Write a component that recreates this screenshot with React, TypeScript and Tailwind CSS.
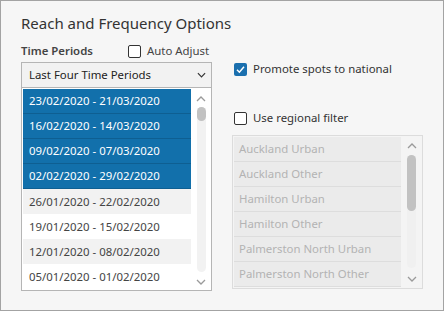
import React from "react";

const font = { fontFamily: '"Noto Sans", "Open Sans", sans-serif' };

function Chevron({ up = false, color = "#9a9a9a", w = 10 }: { up?: boolean; color?: string; w?: number }) {
  return (
    <svg width={w} height={6} viewBox="0 0 10 6" className="block">
      <path d={up ? "M1 5 L5 1 L9 5" : "M1 1 L5 5 L9 1"} fill="none" stroke={color} strokeWidth={1.3} />
    </svg>
  );
}

function Checkbox({ checked = false }: { checked?: boolean }) {
  if (checked) {
    return (
      <div className="w-[13px] h-[13px] rounded-[2px] bg-[#1a6fae] flex items-center justify-center shrink-0">
        <svg width="11" height="11" viewBox="0 0 11 11">
          <path d="M2 5.8 L4.4 8.2 L9 2.8" fill="none" stroke="white" strokeWidth={1.5} />
        </svg>
      </div>
    );
  }
  return <div className="w-[13px] h-[13px] rounded-[2px] border border-[#333] bg-white shrink-0" />;
}

const periods = [
  "23/02/2020 - 21/03/2020",
  "16/02/2020 - 14/03/2020",
  "09/02/2020 - 07/03/2020",
  "02/02/2020 - 29/02/2020",
  "26/01/2020 - 22/02/2020",
  "19/01/2020 - 15/02/2020",
  "12/01/2020 - 08/02/2020",
  "05/01/2020 - 01/02/2020",
];

const regions = [
  "Auckland Urban",
  "Auckland Other",
  "Hamilton Urban",
  "Hamilton Other",
  "Palmerston North Urban",
  "Palmerston North Other",
];

export default function App() {
  return (
    <div className="w-[444px] h-[312px] bg-white" style={font}>
      <div className="w-[444px] h-[311px] border border-[#a3a3a3] bg-[#f6f6f6] pl-[20px] pt-[11px]">
        <div className="text-[15px] leading-[22px] text-[#333] whitespace-nowrap">Reach and Frequency Options</div>
        <div className="flex mt-[7px]">
          {/* left column */}
          <div className="w-[191px] flex flex-col">
            <div className="flex items-center h-[20px] whitespace-nowrap">
              <span className="text-[11.4px] font-semibold text-[#444] w-[107px]">Time Periods</span>
              <Checkbox />
              <span className="text-[11.4px] text-[#444] ml-[6px]">Auto Adjust</span>
            </div>
            <div className="mt-[1px] h-[26px] border border-[#b5b5b5] bg-[#f2f2f2] flex items-center pl-[7px] pr-[5px] justify-between">
              <span className="text-[11.4px] text-[#222] whitespace-nowrap">Last Four Time Periods</span>
              <Chevron color="#333" w={9} />
            </div>
            <div className="h-[203px] border border-[#b5b5b5] border-t-0 bg-white flex pl-[1px] pt-[1px]">
              <div className="w-[168px] flex flex-col">
                {periods.map((p, i) => {
                  const sel = i < 4;
                  const alt = !sel && i % 2 === 0;
                  return (
                    <div
                      key={p}
                      className={
                        "h-[25px] flex items-center pl-[6px] text-[11.4px] whitespace-nowrap " +
                        (sel
                          ? "bg-[#1270ab] text-white border-b border-[#0e5f92]"
                          : alt
                          ? "bg-[#f2f2f2] text-[#444]"
                          : "bg-white text-[#444]")
                      }
                    >
                      {p}
                    </div>
                  );
                })}
              </div>
              <div className="flex-1 flex flex-col items-center pt-[7px]">
                <Chevron up />
                <div className="mt-[5px] w-[9px] h-[165px] rounded-full bg-[#f2f2f2] flex flex-col">
                  <div className="h-[14px] rounded-full bg-[#c2c2c2]" />
                </div>
                <div className="mt-[7px]">
                  <Chevron />
                </div>
              </div>
            </div>
          </div>
          {/* right column */}
          <div className="ml-[20px] w-[191px] flex flex-col">
            <div className="flex items-center pl-[2px] mt-[18px] h-[20px] whitespace-nowrap">
              <Checkbox checked />
              <span className="text-[11.4px] text-[#333] ml-[6px]">Promote spots to national</span>
            </div>
            <div className="flex items-center pl-[2px] mt-[29px] h-[20px] whitespace-nowrap">
              <Checkbox />
              <span className="text-[11.4px] text-[#333] ml-[6px]">Use regional filter</span>
            </div>
            <div className="mt-[7px] h-[154px] border border-[#dcdcdc] bg-[#f4f4f4] flex pl-[1px] pt-[1px]">
              <div className="w-[167px] flex flex-col">
                {regions.map((r) => (
                  <div
                    key={r}
                    className="h-[25px] flex items-center pl-[5px] text-[11.4px] text-[#b3b3b3] bg-[#ebebeb] border-b border-[#dddddd] whitespace-nowrap"
                  >
                    {r}
                  </div>
                ))}
              </div>
              <div className="flex-1 flex flex-col items-center pt-[6px]">
                <Chevron up />
                <div className="mt-[6px] w-[9px] h-[113px] rounded-full bg-[#f0f0f0] flex flex-col">
                  <div className="h-[56px] rounded-full bg-[#c2c2c2]" />
                </div>
                <div className="mt-[8px]">
                  <Chevron />
                </div>
              </div>
            </div>
          </div>
        </div>
      </div>
    </div>
  );
}
